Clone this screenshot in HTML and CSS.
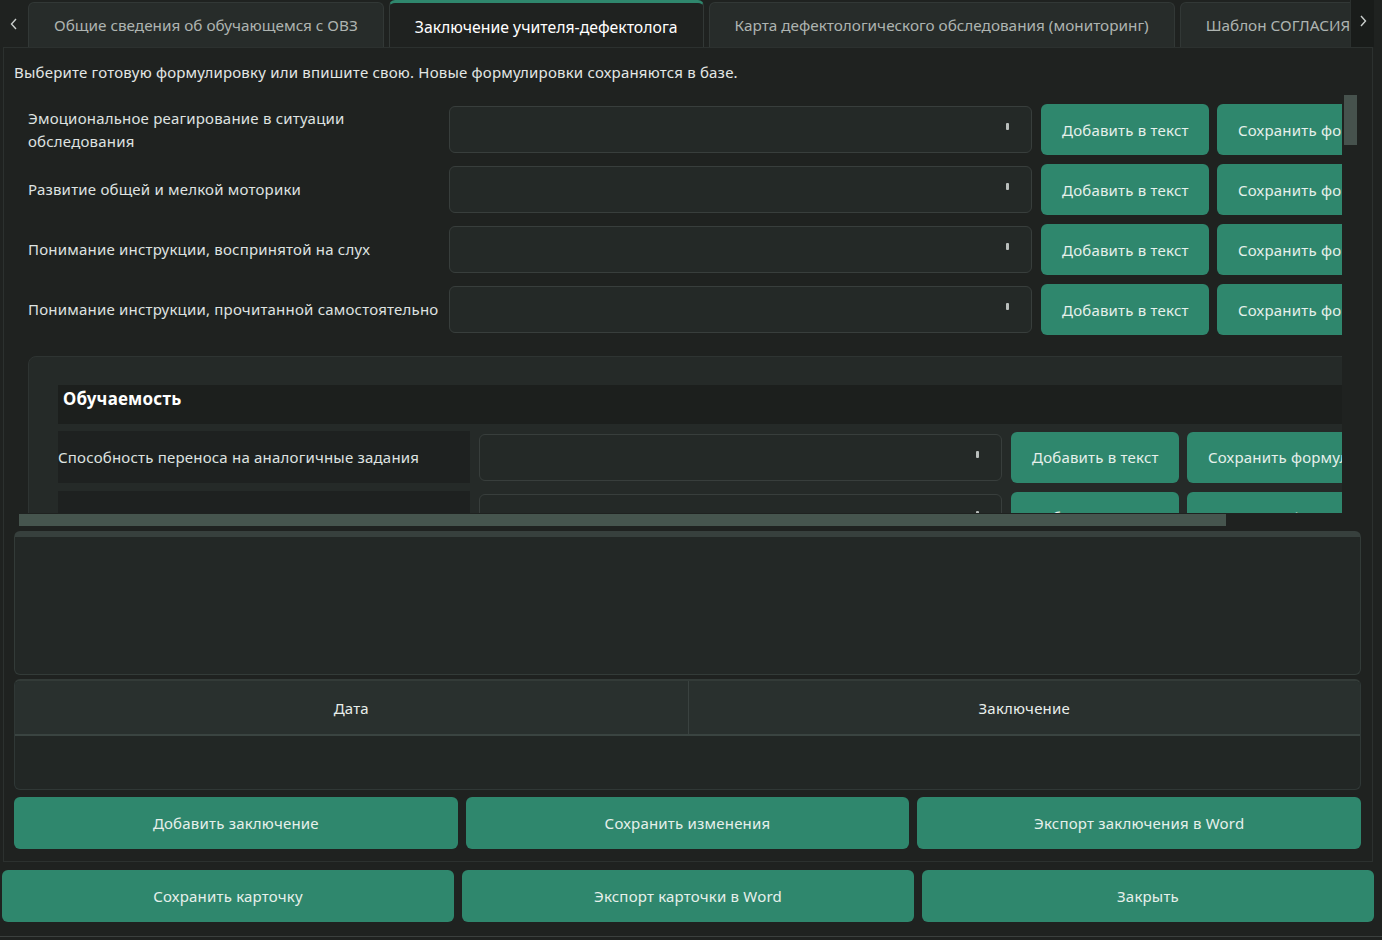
FILE: index.html
```html
<!DOCTYPE html>
<html lang="ru">
<head>
    <meta charset="UTF-8">
    <title>Карточка обучающегося</title>
    <link rel="stylesheet" href="styles.css">
</head>
<body>
<div class="window">
    <div class="tabbar">
        <div class="tab-arrow left">
            <svg width="8" height="12" viewBox="0 0 8 12"><polyline points="6,1 1.5,6 6,11" fill="none" stroke="#c9cecc" stroke-width="1.4"/></svg>
        </div>
        <div class="tabs">
            <div class="tab">Общие сведения об обучающемся с ОВЗ</div>
            <div class="tab active">Заключение учителя-дефектолога</div>
            <div class="tab">Карта дефектологического обследования (мониторинг)</div>
            <div class="tab">Шаблон СОГЛАСИЯ на обследование</div>
        </div>
        <div class="tab-arrow right">
            <svg width="8" height="12" viewBox="0 0 8 12"><polyline points="2,1 6.5,6 2,11" fill="none" stroke="#c9cecc" stroke-width="1.4"/></svg>
        </div>
    </div>

    <div class="pane">
        <p class="hint">Выберите готовую формулировку или впишите свою. Новые формулировки сохраняются в базе.</p>

        <div class="scroll">
            <div class="viewport">
                <div class="content">
                    <div class="row">
                        <div class="label">Эмоциональное реагирование в ситуации обследования</div>
                        <div class="combo"><span class="combo-mark"></span></div>
                        <button class="btn">Добавить в текст</button>
                        <button class="btn">Сохранить формулировку</button>
                    </div>
                    <div class="row">
                        <div class="label">Развитие общей и мелкой моторики</div>
                        <div class="combo"><span class="combo-mark"></span></div>
                        <button class="btn">Добавить в текст</button>
                        <button class="btn">Сохранить формулировку</button>
                    </div>
                    <div class="row">
                        <div class="label">Понимание инструкции, воспринятой на слух</div>
                        <div class="combo"><span class="combo-mark"></span></div>
                        <button class="btn">Добавить в текст</button>
                        <button class="btn">Сохранить формулировку</button>
                    </div>
                    <div class="row">
                        <div class="label">Понимание инструкции, прочитанной самостоятельно</div>
                        <div class="combo"><span class="combo-mark"></span></div>
                        <button class="btn">Добавить в текст</button>
                        <button class="btn">Сохранить формулировку</button>
                    </div>

                    <div class="group">
                        <div class="group-title">Обучаемость</div>
                        <div class="row group-row">
                            <div class="label cell">Способность переноса на аналогичные задания</div>
                            <div class="combo"><span class="combo-mark"></span></div>
                            <button class="btn">Добавить в текст</button>
                            <button class="btn">Сохранить формулировку</button>
                        </div>
                        <div class="row group-row">
                            <div class="label cell">Использование помощи взрослого</div>
                            <div class="combo"><span class="combo-mark"></span></div>
                            <button class="btn">Добавить в текст</button>
                            <button class="btn">Сохранить формулировку</button>
                        </div>
                    </div>
                </div>
            </div>
            <div class="vbar"><div class="vbar-handle"></div></div>
            <div class="hbar"><div class="hbar-handle"></div></div>
        </div>

        <div class="textedit"></div>

        <div class="table">
            <div class="table-head">
                <div class="th">Дата</div>
                <div class="th">Заключение</div>
            </div>
            <div class="table-body"></div>
        </div>

        <div class="btn-row">
            <button class="btn wide">Добавить заключение</button>
            <button class="btn wide">Сохранить изменения</button>
            <button class="btn wide">Экспорт заключения в Word</button>
        </div>
    </div>

    <div class="footer">
        <button class="btn wide">Сохранить карточку</button>
        <button class="btn wide">Экспорт карточки в Word</button>
        <button class="btn wide">Закрыть</button>
    </div>
    <div class="statusline"></div>
</div>
</body>
</html>
```

FILE: styles.css
```css
* {
    margin: 0;
    padding: 0;
    box-sizing: border-box;
}
body {
    width: 1382px;
    height: 940px;
    overflow: hidden;
    background: #1f2220;
    color: #dfe3e1;
    font-family: "Noto Sans", "Open Sans", sans-serif;
    font-size: 15px;
    letter-spacing: 0.2px;
}
.window {
    display: flex;
    flex-direction: column;
    height: 940px;
}

/* tabs */
.tabbar {
    display: flex;
    height: 47px;
    margin-right: 8px;
}
.tab-arrow {
    flex: none;
    display: flex;
    align-items: center;
    justify-content: center;
}
.tab-arrow.left {
    width: 28px;
}
.tab-arrow.right {
    width: 24px;
    background: #191c1a;
    border-left: 1px solid #2b302e;
    padding-bottom: 6px;
}
.tabs {
    flex: 1;
    display: flex;
    align-items: flex-end;
    gap: 5px;
    overflow: hidden;
}
.tab {
    flex: none;
    height: 45px;
    padding: 0 25px;
    display: flex;
    align-items: center;
    white-space: nowrap;
    background: #272c2a;
    border: 1px solid #323836;
    border-bottom: none;
    border-radius: 6px 6px 0 0;
    color: #aeb4b1;
    font-size: 15.3px;
    letter-spacing: 0;
}
.tab.active {
    height: 47px;
    padding-top: 3px;
    background: #1f2220;
    border-top: 3px solid #2f876d;
    color: #ffffff;
    font-size: 15.8px;
}

/* pane */
.pane {
    margin-left: 3px;
    width: 1370px;
    height: 815px;
    border: 1px solid #2c312f;
    padding: 10px 11px 11px 10px;
    display: flex;
    flex-direction: column;
}
.hint {
    margin: 3px 0 5px;
    line-height: 22px;
    color: #e3e7e5;
}

.scroll {
    display: grid;
    grid-template-columns: 1328px 19px;
    grid-template-rows: 425px 14px;
}
.viewport {
    overflow: hidden;
}
.content {
    padding: 16px 0 0 14px;
    width: 1400px;
}
.row {
    display: grid;
    grid-template-columns: 412px 583px 168px 168px;
    column-gap: 9px;
    align-items: center;
    height: 51px;
    margin-bottom: 9px;
}
.row .btn:last-child {
    margin-left: -1px;
}
.label {
    line-height: 23px;
    color: #dfe3e1;
}
.combo {
    height: 47px;
    background: #242927;
    border: 1px solid #383e3c;
    border-radius: 6px;
    display: flex;
    justify-content: flex-end;
    padding: 16px 22px 0 0;
}
.combo-mark {
    width: 3px;
    height: 7px;
    background: #b9bebc;
    border-radius: 1px;
}

.btn {
    height: 51px;
    border: none;
    border-radius: 6px;
    background: #2f876d;
    color: #e6f0eb;
    font-family: inherit;
    font-size: 15px;
    letter-spacing: 0.2px;
    white-space: nowrap;
    overflow: hidden;
    text-align: left;
    padding-left: 21px;
}
.btn.wide {
    height: 52px;
    flex: 1;
    text-align: center;
    padding: 0;
}

/* group box */
.group {
    margin-top: 21px;
    background: #252a28;
    border: 1px solid #2e3432;
    border-radius: 8px 0 0 0;
    padding: 28px 0 0 29px;
}
.group-title {
    height: 39px;
    background: #1c1f1d;
    padding-left: 5px;
    font-weight: bold;
    font-size: 17px;
    line-height: 28px;
    color: #ffffff;
}
.group-row {
    margin-top: 7px;
    margin-bottom: 0;
    height: 52px;
    grid-template-columns: 412px 523px 168px 168px;
}
.group-row + .group-row {
    margin-top: 8px;
}
.cell {
    align-self: stretch;
    background: #1e2120;
    display: flex;
    align-items: center;
}

/* scroll bars */
.vbar {
    padding: 7px 0 0 2px;
}
.vbar-handle {
    width: 13px;
    height: 50px;
    background: #46524d;
}
.hbar {
    padding: 1px 0 0 5px;
}
.hbar-handle {
    width: 1207px;
    height: 12px;
    background: #46554e;
}

/* text edit */
.textedit {
    margin-top: 4px;
    height: 144px;
    background: #232826;
    border: 1px solid #333b38;
    border-top: 6px solid #37403d;
    border-radius: 6px;
}

/* table */
.table {
    margin-top: 4px;
    height: 111px;
    background: #222725;
    border: 1px solid #303836;
    border-top: 2px solid #333b38;
    border-radius: 6px;
    overflow: hidden;
}
.table-head {
    display: grid;
    grid-template-columns: 1fr 1fr;
    height: 55px;
    background: #29302e;
    border-bottom: 2px solid #3a4441;
}
.th {
    display: flex;
    align-items: center;
    justify-content: center;
    color: #e8eeeb;
}
.th + .th {
    border-left: 1px solid #3a4240;
}

.btn-row {
    margin-top: 7px;
    display: flex;
    gap: 8px;
}

/* bottom buttons */
.footer {
    display: flex;
    gap: 8px;
    padding: 8px 8px 0 2px;
}
.statusline {
    margin-top: auto;
    height: 4px;
    border-top: 1px solid #3b403e;
}
```
